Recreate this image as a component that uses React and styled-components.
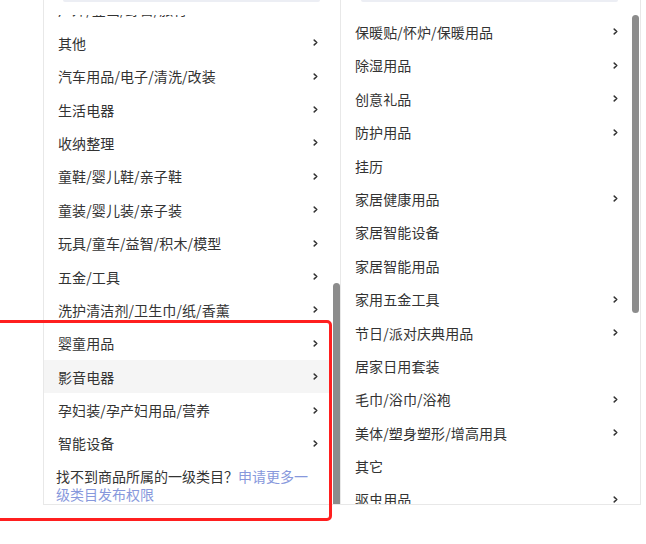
import React from "react";
import styled, { createGlobalStyle } from "styled-components";

const GlobalStyle = createGlobalStyle`
  html, body { margin: 0; padding: 0; background: #fff; }
  body { font-family: "Noto Sans CJK SC", "Noto Sans", sans-serif; }
`;

const Page = styled.div`
  position: relative;
  width: 646px;
  height: 544px;
  overflow: hidden;
  background: #fff;
  padding-left: 43px;
  box-sizing: border-box;
  display: flex;
  align-items: flex-start;
`;

const Panel = styled.div`
  width: ${(p) => p.$w}px;
  height: 505px;
  box-sizing: border-box;
  border: 1px solid #e8e8e8;
  border-top: none;
  ${(p) => (p.$noLeft ? "border-left: none;" : "")}
  display: flex;
  flex-direction: column;
  background: #fff;
`;

const Header = styled.div`
  height: 15px;
  flex: none;
  padding: 0 ${(p) => p.$pr}px 0 ${(p) => p.$pl}px;
`;

const SearchEdge = styled.div`
  height: 2px;
  background: #eceef4;
  border-radius: 0 0 4px 4px;
`;

const Viewport = styled.div`
  position: relative;
  flex: 1;
  overflow: hidden;
`;

const List = styled.ul`
  list-style: none;
  margin: 0 8px 0 0;
  padding: 0;
`;

const Row = styled.li`
  height: 33.4px;
  box-sizing: border-box;
  padding: 0 14px 0 14px;
  display: flex;
  align-items: center;
  justify-content: space-between;
  font-size: 14px;
  color: #333;
  white-space: nowrap;
  background: ${(p) => (p.$active ? "#f5f5f5" : "transparent")};
`;

const Label = styled.span`
  letter-spacing: 0.1px;
`;

const Footer = styled.li`
  padding: 7px 20px 0 12px;
  font-size: 14px;
  line-height: 18px;
  color: #333;
`;

const Link = styled.span`
  color: #8798dc;
`;

const Thumb = styled.div`
  position: absolute;
  right: ${(p) => p.$right}px;
  width: 7px;
  background: #8c8c8c;
  border-radius: 4px;
`;

const Annotation = styled.div`
  position: absolute;
  left: -10px;
  top: 320px;
  width: 342px;
  height: 201px;
  box-sizing: border-box;
  border: 3px solid #ff1f1f;
  border-radius: 5px;
  pointer-events: none;
`;

const Chevron = () => (
  <svg width="5" height="7" viewBox="0 0 5 7" aria-hidden="true">
    <polyline
      points="1.2,1.1 3.8,3.5 1.2,5.9"
      fill="none"
      stroke="#333"
      strokeWidth="1.5"
      strokeLinecap="round"
      strokeLinejoin="round"
    />
  </svg>
);

const leftItems = [
  { t: "户外/登山/野营/旅行", c: true },
  { t: "其他", c: true },
  { t: "汽车用品/电子/清洗/改装", c: true },
  { t: "生活电器", c: true },
  { t: "收纳整理", c: true },
  { t: "童鞋/婴儿鞋/亲子鞋", c: true },
  { t: "童装/婴儿装/亲子装", c: true },
  { t: "玩具/童车/益智/积木/模型", c: true },
  { t: "五金/工具", c: true },
  { t: "洗护清洁剂/卫生巾/纸/香薰", c: true },
  { t: "婴童用品", c: true },
  { t: "影音电器", c: true, active: true },
  { t: "孕妇装/孕产妇用品/营养", c: true },
  { t: "智能设备", c: true },
];

const rightItems = [
  { t: "保暖贴/怀炉/保暖用品", c: true },
  { t: "除湿用品", c: true },
  { t: "创意礼品", c: true },
  { t: "防护用品", c: true },
  { t: "挂历", c: false },
  { t: "家居健康用品", c: true },
  { t: "家居智能设备", c: false },
  { t: "家居智能用品", c: false },
  { t: "家用五金工具", c: true },
  { t: "节日/派对庆典用品", c: true },
  { t: "居家日用套装", c: false },
  { t: "毛巾/浴巾/浴袍", c: true },
  { t: "美体/塑身塑形/增高用具", c: true },
  { t: "其它", c: false },
  { t: "驱虫用品", c: true },
];

export default function App() {
  return (
    <>
      <GlobalStyle />
      <Page>
        <Panel $w={298}>
          <Header $pl={19} $pr={20}>
            <SearchEdge />
          </Header>
          <Viewport>
            <List style={{ marginTop: -22.3 }}>
              {leftItems.map((it) => (
                <Row key={it.t} $active={it.active}>
                  <Label>{it.t}</Label>
                  {it.c && <Chevron />}
                </Row>
              ))}
              <Footer>
                找不到商品所属的一级类目？<Link>申请更多一级类目发布权限</Link>
              </Footer>
            </List>
            <Thumb $right={0} style={{ top: 268, height: 226 }} />
          </Viewport>
        </Panel>
        <Panel $w={300} $noLeft>
          <Header $pl={20} $pr={22}>
            <SearchEdge />
          </Header>
          <Viewport>
            <List style={{ paddingTop: 0.3 }}>
              {rightItems.map((it) => (
                <Row key={it.t}>
                  <Label>{it.t}</Label>
                  {it.c && <Chevron />}
                </Row>
              ))}
            </List>
            <Thumb $right={1} style={{ top: 0, height: 298 }} />
          </Viewport>
        </Panel>
        <Annotation />
      </Page>
    </>
  );
}
